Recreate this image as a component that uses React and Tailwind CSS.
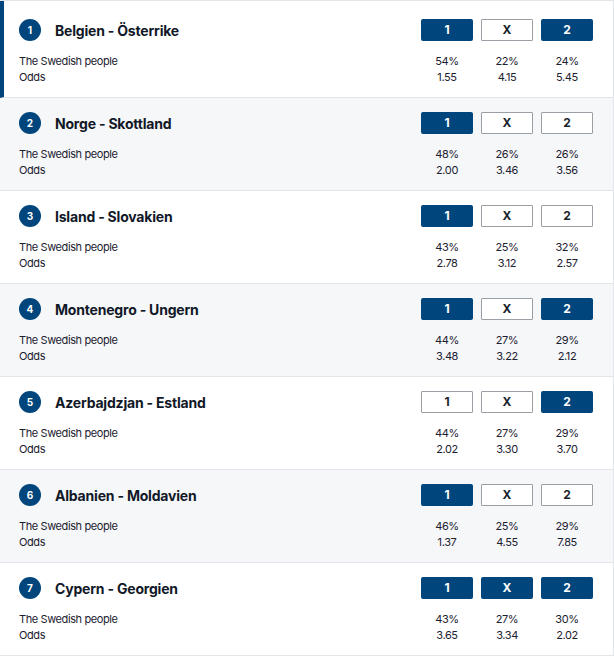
import React from "react";

const matches = [
  { id: 1, title: "Belgien - Österrike", pick: [true, false, true], people: ["54%", "22%", "24%"], odds: ["1.55", "4.15", "5.45"] },
  { id: 2, title: "Norge - Skottland", pick: [true, false, false], people: ["48%", "26%", "26%"], odds: ["2.00", "3.46", "3.56"] },
  { id: 3, title: "Island - Slovakien", pick: [true, false, false], people: ["43%", "25%", "32%"], odds: ["2.78", "3.12", "2.57"] },
  { id: 4, title: "Montenegro - Ungern", pick: [true, false, true], people: ["44%", "27%", "29%"], odds: ["3.48", "3.22", "2.12"] },
  { id: 5, title: "Azerbajdzjan - Estland", pick: [false, false, true], people: ["44%", "27%", "29%"], odds: ["2.02", "3.30", "3.70"] },
  { id: 6, title: "Albanien - Moldavien", pick: [true, false, false], people: ["46%", "25%", "29%"], odds: ["1.37", "4.55", "7.85"] },
  { id: 7, title: "Cypern - Georgien", pick: [true, true, true], people: ["43%", "27%", "30%"], odds: ["3.65", "3.34", "2.02"] },
];

const labels = ["1", "X", "2"];

const PickButton = ({ label, on }) => (
  <div
    className={
      on
        ? "w-[52px] h-[22px] rounded-[2px] bg-[#00467c] text-white flex items-center justify-center text-[12px] font-bold"
        : "w-[52px] h-[22px] rounded-[1px] bg-white border border-[#9a9ea5] text-[#1a1f2b] flex items-center justify-center text-[12px] font-bold"
    }
  >
    {label}
  </div>
);

const MatchRow = ({ m, first, shaded }) => (
  <div
    className={`border-b border-[#e2e5ea] pr-[20px] pb-[12px] ${
      first ? "pt-[18px] border-l-4 border-l-[#00467c] pl-[15px]" : "pt-[14px] pl-[19px]"
    } ${shaded ? "bg-[#f6f7f9]" : "bg-white"}`}
  >
    {/* header */}
    <div className="flex items-center h-[22px]">
      <div className="w-[22px] h-[22px] rounded-full bg-[#00467c] text-white text-[10px] font-bold flex items-center justify-center">
        {m.id}
      </div>
      <div className="ml-[14px] text-[14px] font-bold text-[#111827] tracking-[-0.2px]">
        {m.title}
      </div>
      <div className="ml-auto flex gap-[8px]">
        {labels.map((l, i) => (
          <PickButton key={l} label={l} on={m.pick[i]} />
        ))}
      </div>
    </div>
    {/* stats */}
    <div className="mt-[12px] text-[11px] leading-[16px] text-[#1b2130] tracking-[-0.4px]">
      <div className="flex">
        <div>The Swedish people</div>
        <div className="ml-auto flex gap-[8px]">
          {m.people.map((v, i) => (
            <div key={i} className="w-[52px] text-center">{v}</div>
          ))}
        </div>
      </div>
      <div className="flex">
        <div>Odds</div>
        <div className="ml-auto flex gap-[8px]">
          {m.odds.map((v, i) => (
            <div key={i} className="w-[52px] text-center">{v}</div>
          ))}
        </div>
      </div>
    </div>
  </div>
);

export default function App() {
  return (
    <div className="w-[614px] bg-white" style={{ fontFamily: "Inter, 'Noto Sans', sans-serif" }}>
      <div className="border-t border-r border-[#e2e5ea]">
        {matches.map((m, i) => (
          <MatchRow key={m.id} m={m} first={i === 0} shaded={i % 2 === 1} />
        ))}
      </div>
    </div>
  );
}
